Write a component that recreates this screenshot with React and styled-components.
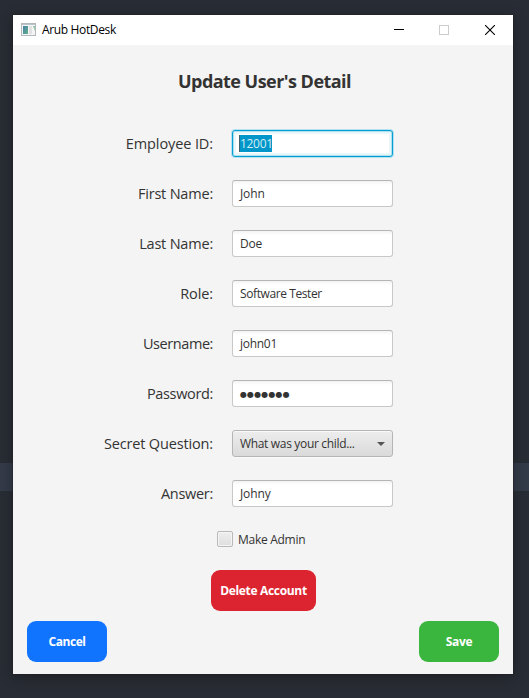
import React from 'react';
import styled, { createGlobalStyle, css } from 'styled-components';

const GlobalStyle = createGlobalStyle`
  * { box-sizing: border-box; }
  body { margin: 0; overflow: hidden; font-family: "Open Sans", "Noto Sans", sans-serif; }
`;

const Desktop = styled.div`
  width: 529px;
  height: 698px;
  padding: 15px 16px 24px 13px;
  background: linear-gradient(#282c34 463px, #333a48 463px, #333a48 491px, #282c34 491px);
`;

const Window = styled.main`
  display: flex;
  flex-direction: column;
  width: 500px;
  height: 659px;
  background: #f4f4f4;
  box-shadow: 0 0 0 1px rgba(30, 32, 34, 0.45), 0 3px 12px rgba(0, 0, 0, 0.3);
`;

const TitleBar = styled.header`
  display: flex;
  align-items: center;
  height: 30px;
  flex: none;
  padding-left: 8px;
  background: #fff;
  svg { display: block; flex: none; }
`;

const WindowTitle = styled.span`
  flex: 1;
  margin-left: 5px;
  font-size: 12px;
  line-height: 16px;
  letter-spacing: -0.35px;
  color: #000;
`;

const WindowControl = styled.span`
  display: flex;
  justify-content: center;
  width: ${(p) => p.$width || 46}px;
`;

const Heading = styled.h1`
  margin: 23px 0 0;
  padding-left: 3px;
  text-align: center;
  font-size: 18px;
  line-height: 26px;
  font-weight: 700;
  letter-spacing: ${(p) => p.$tracking}px;
  color: #333;
`;

const Form = styled.div`
  display: grid;
  grid-template-columns: 200px 161px;
  grid-auto-rows: 27px;
  gap: 23px 19px;
  margin-top: 36px;
`;

const Label = styled.label`
  text-align: right;
  font-size: 14.5px;
  line-height: 27px;
  letter-spacing: ${(p) => p.$tracking}px;
  white-space: nowrap;
  color: #333;
`;

const Field = styled.div`
  display: flex;
  align-items: center;
  padding: 0 7px;
  border: 1px solid #c8c8c8;
  border-top-color: #b5b5b5;
  border-radius: 3px;
  background: linear-gradient(#f3f3f3, #fff 4px);
  font-size: 12px;
  line-height: 17px;
  letter-spacing: ${(p) => p.$tracking}px;
  white-space: nowrap;
  color: #333;
  ${(p) => p.$focused && css`
    border-color: #039ed3;
    background: #fff;
    box-shadow: 0 0 0 1px #b5e1f0, inset 0 0 0 1px #b0dfee, inset 0 0 0 3px #e9f6fa;
  `}
`;

const Selection = styled.span`
  height: 17px;
  width: 33px;
  margin-left: -1px;
  border-left: 1px solid #44626d;
  background: #0096c9;
  color: #d5edf5;
`;

const Select = styled(Field)`
  justify-content: space-between;
  border-color: #b5b5b5;
  background: linear-gradient(#ededed, #dadada);
  box-shadow: inset 0 1px #f9f9f9, 0 1px #f9f9f9;
`;

const CheckRow = styled.div`
  display: flex;
  align-items: center;
  gap: 5px;
  height: 16px;
  margin: 24px 0 0 204px;
  font-size: 12px;
  letter-spacing: -0.28px;
  color: #333;
`;

const CheckBox = styled.span`
  width: 16px;
  height: 16px;
  border: 1px solid #b8b8b8;
  border-radius: 2px;
  background: linear-gradient(#eee, #dedede);
  box-shadow: inset 0 0 0 1px #f5f5f5;
`;

const Button = styled.button`
  display: block;
  width: ${(p) => p.$width || 80}px;
  height: 41px;
  padding: 0;
  border: 0;
  border-radius: 9px;
  background: ${(p) => p.$color};
  color: #fff;
  font: 700 12px/17px "Open Sans", sans-serif;
  letter-spacing: ${(p) => p.$tracking}px;
`;

const DeleteRow = styled.div`
  margin: 23px 0 0 198px;
`;

const Footer = styled.footer`
  display: flex;
  justify-content: space-between;
  margin: 10px 14px 0;
`;

const AppIcon = () => (
  <svg width="16" height="14" viewBox="0 0 16 14">
    <defs>
      <linearGradient id="pane" x1="0" y1="0" x2="1" y2="1">
        <stop offset="0" stopColor="#467fa8" />
        <stop offset="1" stopColor="#62b08c" />
      </linearGradient>
    </defs>
    <rect x="0.5" y="0.5" width="14" height="12" fill="#f5f5f5" stroke="#b2b8bc" />
    <path d="M1 1.5h13" stroke="#b9c4cc" />
    <rect x="2" y="3" width="5" height="8" fill="url(#pane)" />
    <rect x="8" y="3" width="3" height="8" fill="#dfe1e3" />
    <path d="M12 3h2v5z" fill="#8bc5a5" />
  </svg>
);

const rows = [
  { label: 'Employee ID:', lt: -0.1, value: '12001', vt: -0.3, kind: 'focused' },
  { label: 'First Name:', lt: -0.2, value: 'John', vt: -0.1 },
  { label: 'Last Name:', lt: -0.2, value: 'Doe', vt: -0.2 },
  { label: 'Role:', lt: -0.1, value: 'Software Tester', vt: -0.4 },
  { label: 'Username:', lt: -0.42, value: 'john01', vt: -0.28 },
  { label: 'Password:', lt: -0.35, value: '●●●●●●●', vt: 0, kind: 'password' },
  { label: 'Secret Question:', lt: -0.15, value: 'What was your child...', vt: -0.33, kind: 'select' },
  { label: 'Answer:', lt: -0.3, value: 'Johny', vt: -0.1 },
];

const Mask = styled.span`
  padding-top: 1px;
  font: 8px/17px "DejaVu Sans", sans-serif;
  letter-spacing: 0.13px;
`;

function Control({ kind, value, vt }) {
  if (kind === 'select') {
    return (
      <Select $tracking={vt}>
        {value}
        <svg width="8" height="4" viewBox="0 0 8 4"><path d="M0 0h8L4 4z" fill="#555" /></svg>
      </Select>
    );
  }
  return (
    <Field $tracking={vt} $focused={kind === 'focused'}>
      {kind === 'focused' ? <Selection>{value}</Selection> : kind === 'password' ? <Mask>{value}</Mask> : value}
    </Field>
  );
}

export default function App() {
  return (
    <>
      <GlobalStyle />
      <Desktop>
        <Window>
          <TitleBar>
            <AppIcon />
            <WindowTitle>Arub HotDesk</WindowTitle>
            <WindowControl $width={44}>
              <svg width="10" height="10"><path d="M0 4.5h10" stroke="#000" /></svg>
            </WindowControl>
            <WindowControl>
              <svg width="10" height="10"><rect x="0.5" y="0.5" width="9" height="9" fill="none" stroke="#ccc" /></svg>
            </WindowControl>
            <WindowControl>
              <svg width="10" height="10"><path d="M0 0l10 10M10 0L0 10" stroke="#000" strokeWidth="1.1" /></svg>
            </WindowControl>
          </TitleBar>
          <Heading $tracking={-0.54}>Update User's Detail</Heading>
          <Form>
            {rows.map((row) => (
              <React.Fragment key={row.label}>
                <Label $tracking={row.lt}>{row.label}</Label>
                <Control {...row} />
              </React.Fragment>
            ))}
          </Form>
          <CheckRow><CheckBox />Make Admin</CheckRow>
          <DeleteRow><Button $color="#dc2430" $width={105} $tracking={-0.33}>Delete Account</Button></DeleteRow>
          <Footer>
            <Button $color="#1174ff" $tracking={-0.45}>Cancel</Button>
            <Button $color="#3ab63e" $tracking={-0.35}>Save</Button>
          </Footer>
        </Window>
      </Desktop>
    </>
  );
}
